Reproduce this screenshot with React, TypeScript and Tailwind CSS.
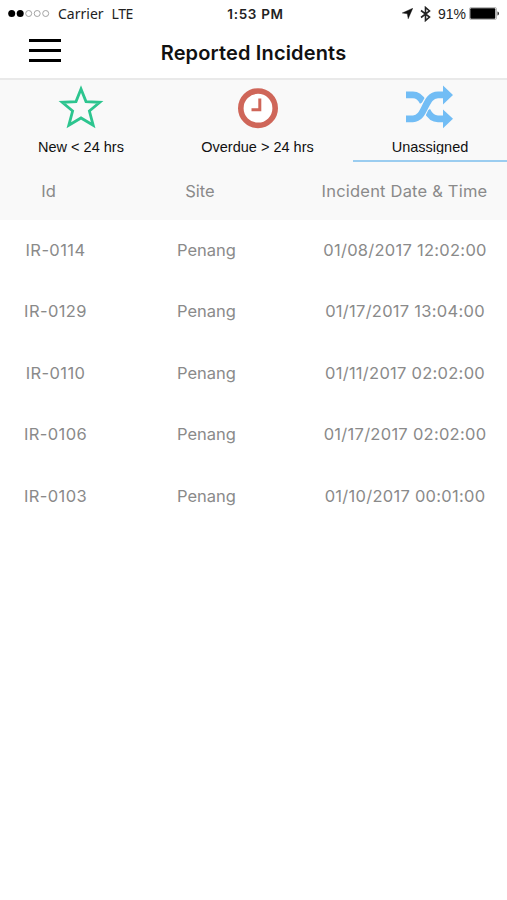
import { useState } from "react";
import type { ReactNode } from "react";

/** 사고 보고 목록의 한 행 */
type Incident = {
  id: string;
  site: string;
  reportedAt: string;
};

type TabKey = "new" | "overdue" | "unassigned";

const INCIDENTS: Incident[] = [
  { id: "IR-0114", site: "Penang", reportedAt: "01/08/2017 12:02:00" },
  { id: "IR-0129", site: "Penang", reportedAt: "01/17/2017 13:04:00" },
  { id: "IR-0110", site: "Penang", reportedAt: "01/11/2017 02:02:00" },
  { id: "IR-0106", site: "Penang", reportedAt: "01/17/2017 02:02:00" },
  { id: "IR-0103", site: "Penang", reportedAt: "01/10/2017 00:01:00" },
];

function StarIcon() {
  return (
    <svg width="46" height="44" viewBox="0 0 46 44" fill="none">
      <path
        d="M23 4 28 16.6 41.8 17.3 31.4 26 35.2 40.3 23 33 10.8 40.3 14.6 26 4.2 17.3 18 16.6Z"
        stroke="#2dc58f"
        strokeWidth="2.8"
      />
    </svg>
  );
}

function ClockIcon() {
  return (
    <svg width="46" height="44" viewBox="0 0 46 44" fill="none">
      <circle cx="23" cy="23.2" r="17.2" fill="#fff" stroke="#cf6659" strokeWidth="5.6" />
      <path d="M24.8 13.5V24.8H16.5" stroke="#cf6659" strokeWidth="3" />
    </svg>
  );
}

function ShuffleIcon() {
  return (
    <svg width="48" height="44" viewBox="0 0 48 44" fill="none">
      <path d="M0 9.8H7C11.5 9.8 14.5 12.5 17 17" stroke="#72bdf5" strokeWidth="6.8" />
      <path d="M21 25.5C24 31.5 27 33.8 32 33.8H38" stroke="#72bdf5" strokeWidth="6.8" />
      {/* 교차하는 선 사이의 틈 */}
      <path d="M10 33.4C20 30.5 18 10 32 9.8" stroke="#f9f9f9" strokeWidth="8.8" />
      <path d="M0 33.8H7C20 33.8 18 9.8 32 9.8H38" stroke="#72bdf5" strokeWidth="6.8" />
      <path d="M37 0.6 47 10 37 19.4ZM37 24.4 47 33.8 37 43.2Z" fill="#72bdf5" />
    </svg>
  );
}

/** 상단 상태 표시줄 (신호, 시간, 배터리) */
function StatusBar() {
  return (
    <div className="grid h-[27px] grid-cols-[170px_171px_166px] items-center text-[14px] text-[#222]">
      <div className="flex items-center pl-2">
        <svg width="42" height="8" viewBox="0 0 42 8">
          <circle cx="3.7" cy="3.5" r="3.5" fill="#000" />
          <circle cx="12.2" cy="3.5" r="3.5" fill="#000" />
          <circle cx="20.7" cy="3.5" r="3" fill="none" stroke="#999" strokeWidth="0.9" />
          <circle cx="29.2" cy="3.5" r="3" fill="none" stroke="#999" strokeWidth="0.9" />
          <circle cx="37.7" cy="3.5" r="3" fill="none" stroke="#999" strokeWidth="0.9" />
        </svg>
        <span className="ml-2 font-['Noto_Sans',sans-serif] text-[14px]">Carrier</span>
        <span className="ml-2 font-['Noto_Sans',sans-serif] text-[14px] tracking-[-0.4px]">LTE</span>
      </div>
      <div className="pt-px text-center text-[13.5px] font-semibold tracking-[0.7px]">1:53 PM</div>
      <div className="flex items-center justify-end pr-[7px]">
        <svg width="11" height="11" viewBox="0 0 11 11">
          <path d="M10.8 0.2 6.2 10.8 5.3 5.8 0.2 5Z" fill="#111" stroke="#111" strokeWidth="0.4" />
        </svg>
        <svg className="ml-[7px]" width="11" height="16" viewBox="0 0 11 16" fill="none">
          <path d="M1 4.5 9.5 11 5.5 14.5V1.5L9.5 5 1 11.5" stroke="#222" strokeWidth="1.6" />
        </svg>
        <span className="ml-[7px] pt-px font-['Liberation_Sans',sans-serif] text-[14px]">91%</span>
        <svg className="ml-[3px]" width="31" height="13" viewBox="0 0 31 13">
          <rect x="0.5" y="0.5" width="27" height="12" rx="1.5" fill="#fff" stroke="#aaa" strokeWidth="0.8" />
          <rect x="1.3" y="1.3" width="25" height="10.4" rx="1" fill="#000" />
          <path d="M28.5 4.5C30.4 5 30.4 8 28.5 8.5Z" fill="#222" />
        </svg>
      </div>
    </div>
  );
}

type TabProps = {
  label: string;
  icon: ReactNode;
  active: boolean;
  onSelect: () => void;
};

function Tab({ label, icon, active, onSelect }: TabProps) {
  return (
    <button
      type="button"
      onClick={onSelect}
      className={
        active
          ? "flex flex-col items-center border-b-2 border-[#9bcdf0] pt-[5px]"
          : "flex flex-col items-center border-b-2 border-transparent pt-[5px]"
      }
    >
      {icon}
      {/* 라벨 높이가 낮아 글자 아랫부분이 살짝 잘립니다 */}
      <span className="mt-[10px] h-[15px] overflow-hidden font-['Liberation_Sans',sans-serif] text-[14.5px] leading-[17px] whitespace-nowrap text-[#111]">
        {label}
      </span>
    </button>
  );
}

export default function App() {
  const [tab, setTab] = useState<TabKey>("unassigned");

  return (
    <div className="min-h-screen w-full bg-white font-['Inter',sans-serif]">
      <StatusBar />

      {/* ====== 제목 ====== */}
      <header className="grid h-[51px] grid-cols-[80px_1fr_80px] items-center">
        <button type="button" aria-label="Menu" className="flex flex-col gap-[7px] pb-1 pl-[29px]">
          <span className="h-[3px] w-8 bg-black" />
          <span className="h-[3px] w-8 bg-black" />
          <span className="h-[3px] w-8 bg-black" />
        </button>
        <h1 className="text-center text-[20px] font-semibold tracking-[0.15px] text-[#111]">Reported Incidents</h1>
      </header>

      {/* ====== 탭 ====== */}
      <nav className="grid h-[84px] grid-cols-[162px_191px_154px] border-t-2 border-[#e9e9e9] bg-[#f9f9f9]">
        <Tab label="New < 24 hrs" icon={<StarIcon />} active={tab === "new"} onSelect={() => setTab("new")} />
        <Tab
          label="Overdue > 24 hrs"
          icon={<ClockIcon />}
          active={tab === "overdue"}
          onSelect={() => setTab("overdue")}
        />
        <Tab
          label="Unassigned"
          icon={<ShuffleIcon />}
          active={tab === "unassigned"}
          onSelect={() => setTab("unassigned")}
        />
      </nav>

      {/* ====== 목록 ====== */}
      <div className="grid h-[58px] grid-cols-[97px_206px_203px] items-center bg-[#f9f9f9] text-center text-[16.5px] text-[#8a8a8a]">
        <span>Id</span>
        <span>Site</span>
        <span className="tracking-[0.2px]">Incident Date &amp; Time</span>
      </div>
      {INCIDENTS.map((incident) => (
        <div
          key={incident.id}
          className="grid h-[61.5px] grid-cols-[111px_191px_206px] items-center pb-px text-center text-[16.5px] text-[#8a8a8a]"
        >
          <span className="tracking-[0.4px]">{incident.id}</span>
          <span>{incident.site}</span>
          <span className="tracking-[0.27px]">{incident.reportedAt}</span>
        </div>
      ))}
    </div>
  );
}
